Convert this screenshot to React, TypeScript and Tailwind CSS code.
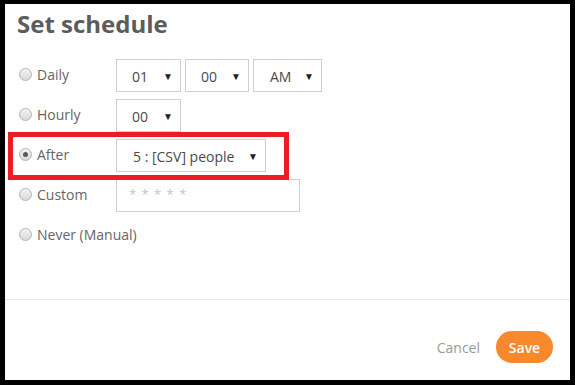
const font = { fontFamily: '"Open Sans", "Noto Sans", sans-serif' };

function Radio({ checked = false }: { checked?: boolean }) {
  return (
    <span className="flex h-[13px] w-[13px] shrink-0 items-center justify-center rounded-full border border-[#b3b3b3] bg-gradient-to-b from-[#f2f2f2] to-[#d9d9d9]">
      {checked && <span className="h-[5px] w-[5px] rounded-full bg-[#5a5a5a]" />}
    </span>
  );
}

function Select({ value, width, padLeft }: { value: string; width: string; padLeft: string }) {
  return (
    <div
      className={`flex h-[33px] items-center justify-between border border-[#cfcfcf] bg-white pr-[7px] pt-[2px] text-[14px] text-[#4a4a4a] ${width} ${padLeft}`}
    >
      <span>{value}</span>
      <span className="text-[10px] text-[#222]">▼</span>
    </div>
  );
}

function Row({ label, checked, children }: { label: string; checked?: boolean; children?: React.ReactNode }) {
  return (
    <div className="flex h-[33px] items-center">
      <div className="flex w-[111px] shrink-0 items-center gap-[5px] whitespace-nowrap pb-[2px] pl-[14px]">
        <Radio checked={checked} />
        <span className="text-[14px] text-[#666]">{label}</span>
      </div>
      <div className="flex gap-[4px]">{children}</div>
    </div>
  );
}

export default function App() {
  return (
    <div className="h-[385px] w-[575px] bg-black pb-[5px] pl-[5px] pr-[5px] pt-[4px]" style={font}>
      <div className="relative flex h-full flex-col bg-white">
        <h1 className="pl-[12px] pt-[4px] text-[24px] font-bold leading-[32px] text-[#5c5c5c]">
          Set schedule
        </h1>

        <div className="mt-[19px] flex flex-col gap-[7px]">
          <Row label="Daily">
            <Select value="01" width="w-[65px]" padLeft="pl-[15px]" />
            <Select value="00" width="w-[64px]" padLeft="pl-[15px]" />
            <Select value="AM" width="w-[69px]" padLeft="pl-[16px]" />
          </Row>
          <Row label="Hourly">
            <Select value="00" width="w-[65px]" padLeft="pl-[15px]" />
          </Row>
          <Row label="After" checked>
            <Select value="5 : [CSV] people" width="w-[150px]" padLeft="pl-[16px]" />
          </Row>
          <Row label="Custom">
            <div className="flex h-[33px] w-[184px] items-start border border-[#cfcfcf] pl-[12px] pt-[5px] text-[13px] tracking-[1px] text-[#c4c4c4]">
              * * * * *
            </div>
          </Row>
          <Row label="Never (Manual)" />
        </div>

        <div className="absolute left-[3px] top-[128px] h-[48px] w-[281px] border-[5px] border-[#ed1c24]" />

        <div className="mt-auto border-t border-[#e8e8e8]" />
        <div className="flex h-[80px] items-end justify-end gap-[16px] pb-[17px] pr-[17px]">
          <button type="button" className="h-[32px] text-[14px] text-[#9a9a9a]">
            Cancel
          </button>
          <button
            type="button"
            className="h-[32px] w-[57px] rounded-full bg-[#f7882b] text-[14px] font-semibold text-white"
          >
            Save
          </button>
        </div>
      </div>
    </div>
  );
}
